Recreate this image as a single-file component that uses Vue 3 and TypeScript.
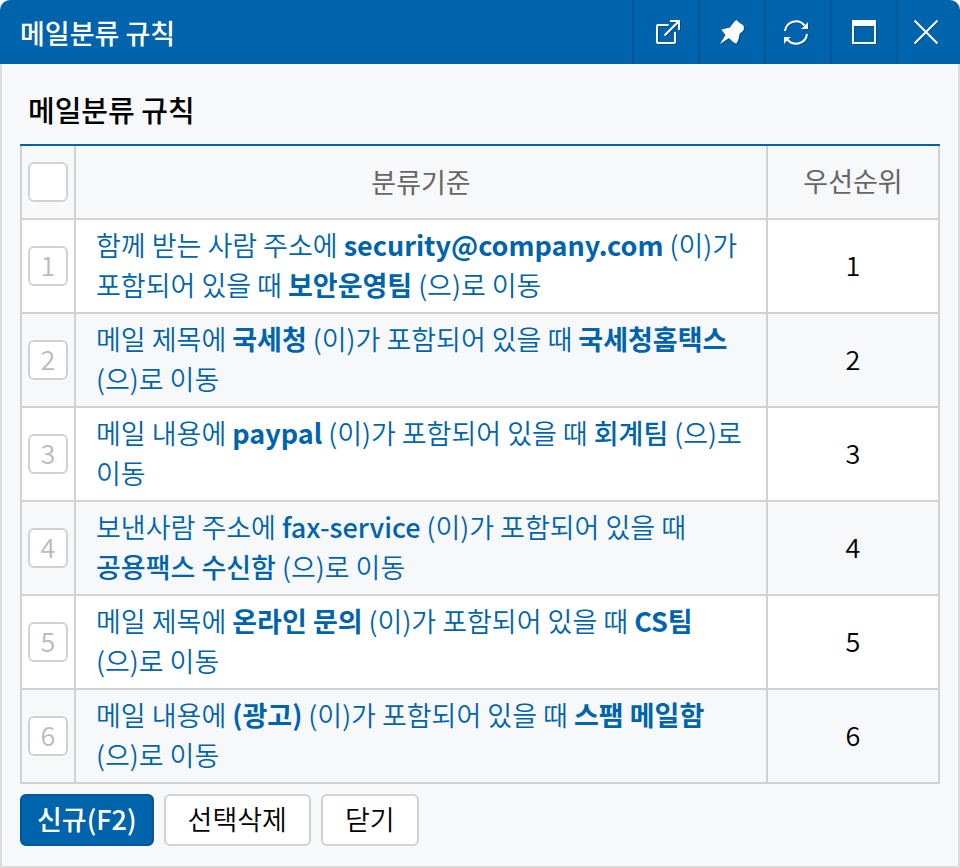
<script setup lang="ts">
import { ref, computed } from 'vue'

interface Part {
  text: string
  style?: 'medium' | 'bold' | 'whole'
}

interface Rule {
  priority: number
  parts: Part[]
}

const moveTo: Part[] = [{ text: ' ' }, { text: '(으)로', style: 'whole' }, { text: ' 이동' }]

const rules: Rule[] = [
  {
    priority: 1,
    parts: [
      { text: '함께 받는 사람 주소에 ' },
      { text: 'security@company.com', style: 'bold' },
      { text: ' (이)가 포함되어 있을 때 ' },
      { text: '보안운영팀', style: 'bold' },
      ...moveTo,
    ],
  },
  {
    priority: 2,
    parts: [
      { text: '메일 제목에 ' },
      { text: '국세청', style: 'bold' },
      { text: ' (이)가 포함되어 있을 때 ' },
      { text: '국세청홈택스', style: 'bold' },
      ...moveTo,
    ],
  },
  {
    priority: 3,
    parts: [
      { text: '메일 내용에 ' },
      { text: 'paypal', style: 'bold' },
      { text: ' (이)가 포함되어 있을 때 ' },
      { text: '회계팀', style: 'medium' },
      ...moveTo,
    ],
  },
  {
    priority: 4,
    parts: [
      { text: '보낸사람 주소에 ' },
      { text: 'fax-service', style: 'medium' },
      { text: ' (이)가 포함되어 있을 때 ' },
      { text: '공용팩스 수신함', style: 'medium' },
      ...moveTo,
    ],
  },
  {
    priority: 5,
    parts: [
      { text: '메일 제목에 ' },
      { text: '온라인 문의', style: 'bold' },
      { text: ' (이)가 포함되어 있을 때 ' },
      { text: 'CS팀', style: 'bold' },
      ...moveTo,
    ],
  },
  {
    priority: 6,
    parts: [
      { text: '메일 내용에 ' },
      { text: '(광고)', style: 'bold' },
      { text: ' (이)가 포함되어 있을 때 ' },
      { text: '스팸 메일함', style: 'bold' },
      ...moveTo,
    ],
  },
]

const selected = ref<number[]>([])

const allSelected = computed({
  get: () => selected.value.length === rules.length,
  set: (on: boolean) => {
    selected.value = on ? rules.map((r) => r.priority) : []
  },
})
</script>

<template>
  <section class="window">
    <header class="titlebar">
      <h1 class="title">메일분류 규칙</h1>
      <div class="tools">
        <button type="button" class="tool" aria-label="새 창으로 열기">
          <svg width="30" height="30" viewBox="-4 -2 30 30" fill="none" stroke="currentColor" stroke-width="2">
            <path d="M13.500 6H3a1 1 0 0 0-1 1v16a1 1 0 0 0 1 1h16a1 1 0 0 0 1-1V13" />
            <path d="M15 2h9v9M24 2 9.500 16.500" />
          </svg>
        </button>
        <button type="button" class="tool" aria-label="고정">
          <svg width="30" height="30" viewBox="-2 -2 30 30" fill="currentColor">
            <path d="M17.500 1 20 3.500l4.500 3L25 10c-1 2.500-3.500 3.500-4.500 5-.5 3-1 7-3.200 9.600C15 24 11.500 20.500 10 19L1 25l5.500-9-4-5.200C5 9.400 9 9.200 11 8.500c2-2.500 3.500-6 6.500-7.500z" />
          </svg>
        </button>
        <button type="button" class="tool" aria-label="새로고침">
          <svg width="30" height="30" viewBox="0 -2 30 30" fill="none" stroke="currentColor" stroke-width="2">
            <path d="M2 12A11 11 0 0 1 21.500 6.500M24 15A11 11 0 0 1 4.500 20.500" />
            <path d="M25 3v7h-7l2.500-2zM1 25v-7h7l-2.500 2z" fill="currentColor" stroke="none" />
          </svg>
        </button>
        <button type="button" class="tool" aria-label="최대화">
          <svg width="30" height="30" viewBox="-2 -2 30 30" fill="none" stroke="currentColor" stroke-width="2">
            <path d="M2 2h22v22H2z" />
            <path d="M1 1h24v6H1z" fill="currentColor" stroke="none" />
          </svg>
        </button>
        <button type="button" class="tool" aria-label="창 닫기">
          <svg width="30" height="30" viewBox="1 -2 30 30" fill="none" stroke="currentColor" stroke-width="2">
            <path d="M1.500 1.500l23 23M24.500 1.500l-23 23" />
          </svg>
        </button>
      </div>
    </header>

    <main class="body">
      <h2 class="heading">메일분류 규칙</h2>
      <table class="rules">
        <thead>
          <tr>
            <th class="col-check">
              <label class="check">
                <input v-model="allSelected" type="checkbox" aria-label="전체 선택" />
              </label>
            </th>
            <th>분류기준</th>
            <th class="col-priority">우선순위</th>
          </tr>
        </thead>
        <tbody>
          <tr v-for="rule in rules" :key="rule.priority">
            <td class="col-check">
              <label class="check">
                <input v-model="selected" type="checkbox" :value="rule.priority" />
                <span>{{ rule.priority }}</span>
              </label>
            </td>
            <td class="criteria">
              <a href="#"><span v-for="(part, i) in rule.parts" :key="i" :class="part.style">{{ part.text }}</span></a>
            </td>
            <td class="col-priority">{{ rule.priority }}</td>
          </tr>
        </tbody>
      </table>
      <div class="actions">
        <button type="button" class="btn primary">신규(F2)</button>
        <button type="button" class="btn">선택삭제</button>
        <button type="button" class="btn">닫기</button>
      </div>
    </main>
  </section>
</template>

<style>
body {
  background: #fff;
}
</style>

<style scoped>
.window {
  box-sizing: border-box;
  min-height: 100vh;
  display: flex;
  flex-direction: column;
  font-family: "Noto Sans CJK KR", sans-serif;
  font-size: 27px;
  line-height: 40px;
  color: #000;
}

.titlebar {
  display: flex;
  align-items: stretch;
  height: 64px;
  padding-left: 20px;
  background: #0064ad;
  border-radius: 10px 10px 0 0;
  color: #fff;
}

.title {
  flex: 1;
  margin: 0;
  padding-top: 13px;
  font-size: 27px;
  font-weight: 500;
}

.tools {
  display: flex;
}

.tool {
  box-sizing: border-box;
  width: 66px;
  display: flex;
  align-items: center;
  justify-content: center;
  padding: 0;
  border: 0;
  border-left: 2px solid #005797;
  background: none;
  color: #fff;
  cursor: pointer;
}

.tool:last-child {
  width: 64px;
}

.tool svg {
  filter: drop-shadow(1px 1px 0 rgba(0, 50, 100, 0.4));
}

.body {
  flex: 1;
  padding: 25px 18px 20px;
  background: #f7f8fa;
  border: solid #dcdcdd;
  border-width: 0 2px 2px;
}

.heading {
  margin: 0 0 15px;
  padding: 0 8px;
  font-size: 29px;
  font-weight: 500;
}

.rules {
  width: 100%;
  border-collapse: separate;
  border-spacing: 0;
  border-top: 2px solid #0064ad;
}

.rules th,
.rules td {
  box-sizing: border-box;
  padding: 0;
  border: solid #d2d2d2;
  border-width: 0 2px 2px 0;
}

.rules th:first-child,
.rules td:first-child {
  border-left-width: 2px;
}

.rules th {
  height: 74px;
  font-weight: 400;
  color: #666;
}

.rules td {
  height: 94px;
}

.rules tbody tr:nth-child(odd) {
  background: #fff;
}

.rules .col-check {
  width: 56px;
}

.rules .col-priority {
  width: 172px;
  padding-bottom: 2px;
  text-align: center;
}

.rules td.col-priority {
  font-weight: 350;
}

.rules .criteria {
  padding: 5px 20px 7px;
  word-break: keep-all;
}

.criteria a {
  font-weight: 350;
  color: #0064ad;
  text-decoration: none;
}

.criteria .medium {
  font-weight: 500;
}

.criteria .bold {
  font-weight: 700;
}

.criteria .whole {
  white-space: nowrap;
}

.check {
  display: grid;
  place-items: center;
  width: 40px;
  height: 40px;
  margin: 0 auto;
  line-height: 38px;
  font-weight: 350;
  color: #bbb;
}

.check input,
.check span {
  grid-area: 1 / 1;
}

.check span {
  align-self: start;
}

.check input {
  appearance: none;
  box-sizing: border-box;
  width: 40px;
  height: 40px;
  margin: 0;
  background: #fff;
  border: 2px solid #d2d2d2;
  border-radius: 6px;
}

.check input:checked {
  border-color: #0064ad;
}

.actions {
  display: flex;
  gap: 10px;
  margin-top: 10px;
}

.btn {
  box-sizing: border-box;
  height: 52px;
  padding: 0 22px 2px;
  border: 2px solid #d2d2d2;
  border-radius: 6px;
  background: #fff;
  color: #000;
  font: inherit;
  font-weight: 350;
  cursor: pointer;
}

.btn.primary {
  padding: 0 15px 2px;
  border-color: #005797;
  background: #0064ad;
  color: #fff;
  font-weight: 500;
}
</style>
